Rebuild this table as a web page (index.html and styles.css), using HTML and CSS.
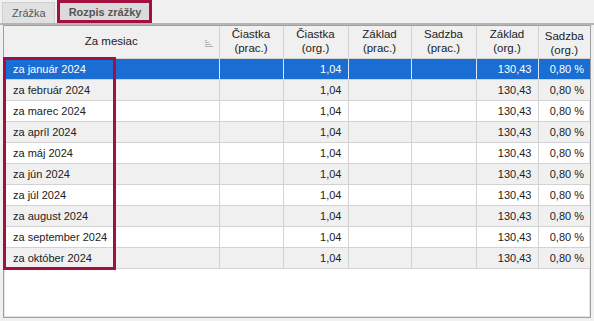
FILE: index.html
```html
<!DOCTYPE html>
<html lang="sk">
<head>
<meta charset="utf-8">
<link rel="stylesheet" href="styles.css">
</head>
<body>
<div class="tabs">
  <div class="tab">Zrážka</div>
  <div class="tab active">Rozpis zrážky</div>
</div>
<div class="panel">
  <div class="grid">
    <table>
      <colgroup>
        <col class="c1"><col class="c2"><col class="c3"><col class="c4"><col class="c5"><col class="c6"><col class="c7">
      </colgroup>
      <thead>
        <tr>
          <th class="first">Za mesiac<span class="sort"><i></i><i></i><i></i><i></i></span></th>
          <th>Čiastka<br>(prac.)</th>
          <th>Čiastka<br>(org.)</th>
          <th>Základ<br>(prac.)</th>
          <th>Sadzba<br>(prac.)</th>
          <th>Základ<br>(org.)</th>
          <th>Sadzba<br>(org.)</th>
        </tr>
      </thead>
      <tbody>
        <tr class="sel"><td>za január 2024</td><td></td><td class="n">1,04</td><td></td><td></td><td class="n">130,43</td><td class="n">0,80 %</td></tr>
        <tr class="alt"><td>za február 2024</td><td></td><td class="n">1,04</td><td></td><td></td><td class="n">130,43</td><td class="n">0,80 %</td></tr>
        <tr><td>za marec 2024</td><td></td><td class="n">1,04</td><td></td><td></td><td class="n">130,43</td><td class="n">0,80 %</td></tr>
        <tr class="alt"><td>za apríl 2024</td><td></td><td class="n">1,04</td><td></td><td></td><td class="n">130,43</td><td class="n">0,80 %</td></tr>
        <tr><td>za máj 2024</td><td></td><td class="n">1,04</td><td></td><td></td><td class="n">130,43</td><td class="n">0,80 %</td></tr>
        <tr class="alt"><td>za jún 2024</td><td></td><td class="n">1,04</td><td></td><td></td><td class="n">130,43</td><td class="n">0,80 %</td></tr>
        <tr><td>za júl 2024</td><td></td><td class="n">1,04</td><td></td><td></td><td class="n">130,43</td><td class="n">0,80 %</td></tr>
        <tr class="alt"><td>za august 2024</td><td></td><td class="n">1,04</td><td></td><td></td><td class="n">130,43</td><td class="n">0,80 %</td></tr>
        <tr><td>za september 2024</td><td></td><td class="n">1,04</td><td></td><td></td><td class="n">130,43</td><td class="n">0,80 %</td></tr>
        <tr class="alt"><td>za október 2024</td><td></td><td class="n">1,04</td><td></td><td></td><td class="n">130,43</td><td class="n">0,80 %</td></tr>
      </tbody>
    </table>
    <div class="highlight"></div>
  </div>
</div>
</body>
</html>
```
FILE: styles.css
```css
* { box-sizing: border-box; }
html, body { margin: 0; padding: 0; }
body {
  width: 594px;
  height: 321px;
  background: #f0f0f0;
  font-family: "Liberation Sans", Arial, sans-serif;
  font-size: 11px;
  color: #222;
  overflow: hidden;
  display: flex;
  flex-direction: column;
}
.tabs {
  display: flex;
  align-items: flex-end;
  height: 23px;
  padding-left: 2px;
  gap: 2px;
}
.tab {
  height: 21px;
  padding: 0 8px 0 9px;
  display: flex;
  align-items: center;
  background: #e1e1e1;
  border: 1px solid #d0d0d0;
  border-bottom: none;
  color: #555;
  font-size: 11px;
}
.tab.active {
  height: 23px;
  background: #dadada;
  border: 3px solid #a3103d;
  font-weight: bold;
  color: #555;
  padding: 0 8px 0 9px;
}
.panel {
  flex: 1;
  border-top: 2px solid #b5b5b5;
  padding: 0 3px 3px 3px;
  display: flex;
}
.grid {
  position: relative;
  flex: 1;
  background: #fff;
  border: 1px solid #a0a0a0;
  box-shadow: inset 0 0 0 1px #e6e6e6;
}
table {
  border-collapse: collapse;
  table-layout: fixed;
  width: 586px;
}
col.c1 { width: 215px; }
col.c2 { width: 64px; }
col.c3 { width: 65px; }
col.c4 { width: 63px; }
col.c5 { width: 65px; }
col.c6 { width: 62px; }
col.c7 { width: 52px; }
thead th {
  height: 32px;
  background: #f0f0f0;
  font-weight: normal;
  text-align: center;
  line-height: 14px;
  padding: 0 2px 2px;
  border-right: 1px solid #d2d2d2;
  border-bottom: 1px solid #d2d2d2;
  color: #222;
  font-size: 11.5px;
}
thead th:last-child { border-right: none; padding-top: 3px; padding-bottom: 0; }
th.first { position: relative; }
.sort {
  position: absolute;
  right: 6px;
  top: 14px;
  display: flex;
  flex-direction: column;
  gap: 1px;
}
.sort i {
  display: block;
  height: 1px;
  background: #b0b0b0;
}
.sort i:nth-child(1) { width: 2px; }
.sort i:nth-child(2) { width: 4px; }
.sort i:nth-child(3) { width: 6px; }
.sort i:nth-child(4) { width: 8px; }
tbody td {
  height: 21px;
  padding: 0 6px 0 9px;
  border-right: 1px solid #d2d2d2;
  border-bottom: 1px solid #d2d2d2;
  white-space: nowrap;
  overflow: hidden;
}
tbody td:last-child { border-right: none; }
tbody td.n { text-align: right; }
tbody tr.alt td { background: #f0f0f0; }
tbody tr.sel td {
  background: #1a6dd2;
  color: #fff;
  border-right-color: #d8e6f8;
}
tbody tr.sel td:last-child { border-right: none; }
.highlight {
  position: absolute;
  left: -1px;
  top: 31px;
  width: 113px;
  height: 213px;
  border: 3px solid #a3103d;
  pointer-events: none;
}
```
